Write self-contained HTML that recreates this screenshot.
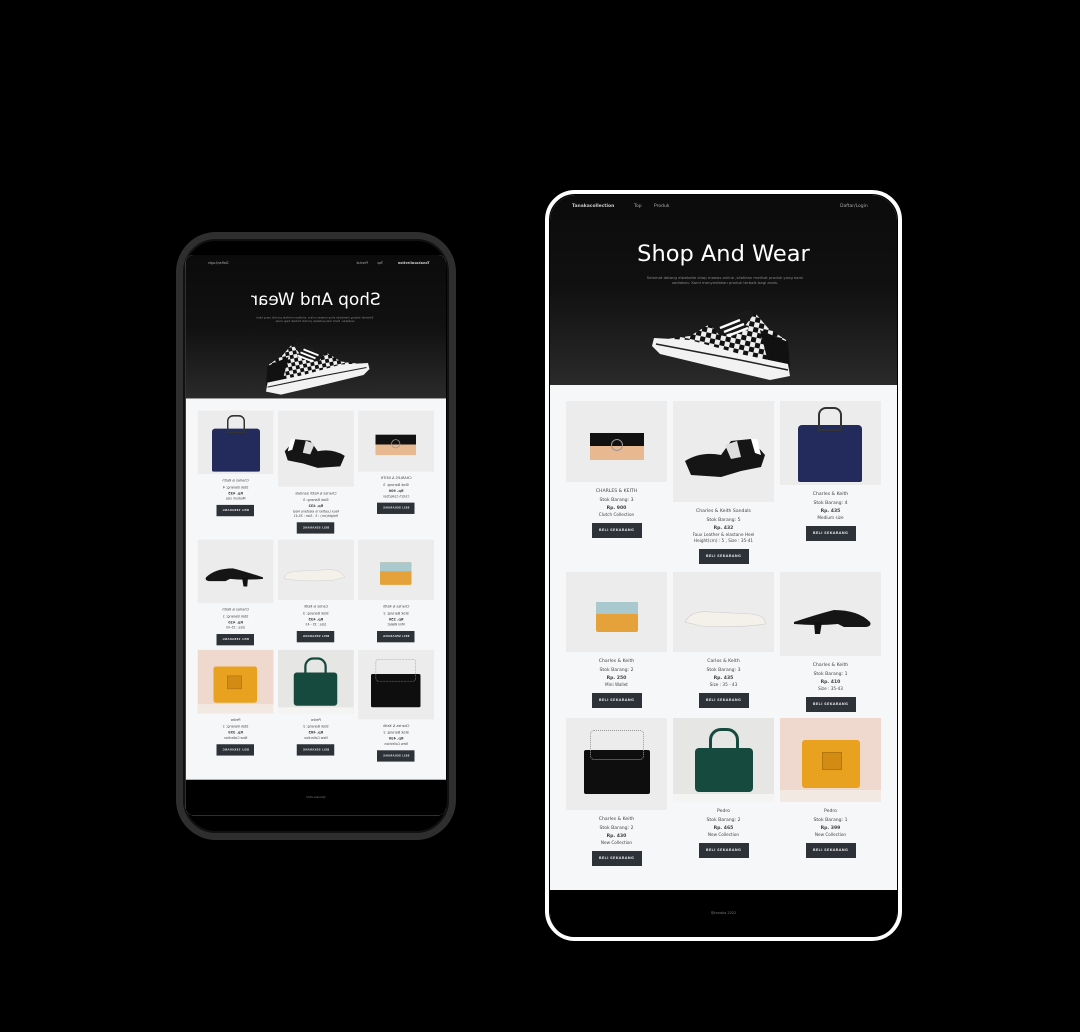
<!DOCTYPE html>
<html><head><meta charset="utf-8"><style>
*{margin:0;padding:0;box-sizing:border-box}
body{width:1080px;height:1032px;background:#000;position:relative;overflow:hidden;font-family:"DejaVu Sans","Liberation Sans",sans-serif}
.frameR{position:absolute;left:545px;top:190px;width:357px;height:751px;border:4px solid #fff;border-radius:30px;background:#000}
.frameL{position:absolute;left:176px;top:232px;width:280px;height:608px;border:7px solid #2e2e2e;border-radius:40px;background:#000;box-shadow:0 0 0 2px #111 inset}
.screen{position:absolute;width:347px;height:742px;overflow:hidden;background:#f6f7f9;transform-origin:0 0}
.hdr{position:absolute;left:0;top:0;width:347px;height:190px;background:linear-gradient(#0b0b0b 0%,#111 50%,#2a2a2a 100%)}
.nav{position:absolute;top:9px;font-size:4.5px;color:#aaa}
.title{position:absolute;top:46px;width:100%;text-align:center;color:#fff;font-size:22.5px;font-family:"DejaVu Sans",sans-serif}
.sub{position:absolute;top:80px;left:95px;width:160px;text-align:center;color:#888;font-size:3.8px;line-height:5px}
.foot{position:absolute;left:0;top:695px;width:347px;height:47px;background:#000;color:#777;font-size:3.5px;text-align:center;padding-top:21px}
.card{position:absolute;width:101px;text-align:center;color:#444;font-size:4.6px;line-height:8.5px}
.img{width:101px;background:#ececec;position:relative;overflow:hidden;margin-bottom:6px}
.card b{font-size:4.6px;display:block;line-height:6px;margin-top:1px}
.card .s{line-height:6px;font-size:4.2px}
.btn{display:block;margin:5px auto 0;width:50px;height:15px;background:#2d3239;color:#ddd;font-size:3.5px;line-height:15px;letter-spacing:.3px;font-weight:bold}
.a{position:absolute}
</style></head><body>

<div class="frameR"></div>
<div class="frameL"></div>

<div class="screen" id="R" style="left:550px;top:195px;border-radius:26px 26px 24px 24px">
 <div class="hdr">
  <div class="nav" style="left:22px;font-weight:bold;color:#ccc">Tanakacollection</div>
  <div class="nav" style="left:84px">Top</div>
  <div class="nav" style="left:104px">Produk</div>
  <div class="nav" style="left:290px">Daftar/Login</div>
  <div class="title">Shop And Wear</div>
  <div class="sub">Selamat datang diwebsite shop mawas online ,silahkan melihat produk yang kami sediakan. Kami menyediakan produk terbaik bagi anda.</div>
  <svg class="a" style="left:100px;top:115px" width="142" height="75" viewBox="0 0 142 75">
   <defs><pattern id="ck" width="10" height="10" patternUnits="userSpaceOnUse" patternTransform="rotate(12)"><rect width="10" height="10" fill="#eee"/><rect width="5" height="5" fill="#111"/><rect x="5" y="5" width="5" height="5" fill="#111"/></pattern></defs>
   <path d="M8 30 L40 26 L60 14 L80 8 L98 2 L106 4 L118 18 L136 30 L138 52 L120 56 Z" fill="url(#ck)"/>
   <path d="M60 14 L80 6 L98 0 L104 4 L92 20 L70 26 Z" fill="#1a1a1a"/>
   <path d="M110 20 L138 32 L140 58 L118 52 Z" fill="#111"/>
   <path d="M4 28 L40 30 L90 44 L138 54 L140 66 L120 70 L60 56 L10 44 L2 36 Z" fill="#f2f2f2"/>
   <path d="M6 34 L90 50 L138 60" stroke="#222" stroke-width="1.5" fill="none"/>
   <path d="M70 18 L90 10 M74 22 L94 14 M78 26 L98 18" stroke="#fff" stroke-width="2.5"/>
  </svg>
 </div>

 <div class="card" style="left:16px;top:206px"><div class="img" style="height:81px"><div class="a" style="left:24px;top:32px;width:54px;height:13px;background:#111"></div><div class="a" style="left:24px;top:45px;width:54px;height:14px;background:#e8b890"></div><div class="a" style="left:45px;top:38px;width:12px;height:12px;border:1.5px solid #999;border-radius:50%"></div></div>
  CHARLES &amp; KEITH<br>Stok Barang: 3<b>Rp. 900</b><div class="s">Clutch Collection</div><span class="btn">BELI SEKARANG</span></div>
 <div class="card" style="left:123px;top:206px"><div class="img" style="height:101px"><svg class="a" style="left:8px;top:30px" width="88" height="50"><path d="M4 30 Q20 20 40 24 L50 10 L70 8 L84 24 L80 36 L60 40 L40 46 L10 44 Z" fill="#151515"/><path d="M44 14 L56 10 L60 26 L50 28 Z" fill="#ddd"/><path d="M70 8 L76 8 L80 24 L74 22 Z" fill="#fff"/></svg></div>
  Charles &amp; Keith Sandals<br>Stok Barang: 5<b>Rp. 432</b><div class="s">Faux Leather &amp; elastane Heel<br>Height(cm) : 5 , Size : 35-41</div><span class="btn">BELI SEKARANG</span></div>
 <div class="card" style="left:230px;top:206px"><div class="img" style="height:84px"><div class="a" style="left:18px;top:24px;width:64px;height:57px;background:#232a5c;border-radius:4px 4px 2px 2px"></div><div class="a" style="left:38px;top:6px;width:24px;height:24px;border:2px solid #333;border-radius:8px 8px 0 0"></div></div>
  Charles &amp; Keith<br>Stok Barang: 4<b>Rp. 435</b><div class="s">Medium size</div><span class="btn">BELI SEKARANG</span></div>

 <div class="card" style="left:16px;top:377px"><div class="img" style="height:80px"><div class="a" style="left:30px;top:30px;width:42px;height:30px;background:#e5a13a;border-radius:2px"></div><div class="a" style="left:30px;top:30px;width:42px;height:12px;background:#a9c9cf"></div></div>
  Charles &amp; Keith<br>Stok Barang: 2<b>Rp. 250</b><div class="s">Mini Wallet</div><span class="btn">BELI SEKARANG</span></div>
 <div class="card" style="left:123px;top:377px"><div class="img" style="height:80px"><svg class="a" style="left:8px;top:30px" width="88" height="30"><path d="M4 20 Q10 8 30 10 L70 12 Q86 14 84 22 Q60 26 20 24 Z" fill="#f4f1ea" stroke="#ccc" stroke-width=".6"/></svg></div>
  Carlos &amp; Keith<br>Stok Barang: 3<b>Rp. 435</b><div class="s">Size : 35 - 43</div><span class="btn">BELI SEKARANG</span></div>
 <div class="card" style="left:230px;top:377px"><div class="img" style="height:84px"><svg class="a" style="left:8px;top:28px" width="88" height="40"><path d="M6 22 Q30 14 46 10 Q70 10 82 22 Q84 26 78 27 L56 27 L50 24 Q30 26 6 24 Z" fill="#151515"/><path d="M26 22 L34 22 L32 34 L27 34 Z" fill="#111"/></svg></div>
  Charles &amp; Keith<br>Stok Barang: 1<b>Rp. 410</b><div class="s">Size : 35-43</div><span class="btn">BELI SEKARANG</span></div>

 <div class="card" style="left:16px;top:523px"><div class="img" style="height:92px"><div class="a" style="left:18px;top:32px;width:66px;height:44px;background:#0e0e0e;border-radius:2px"></div><div class="a" style="left:24px;top:12px;width:54px;height:30px;border:1px dotted #999;border-radius:4px"></div></div>
  Charles &amp; Keith<br>Stok Barang: 2<b>Rp. 430</b><div class="s">New Collection</div><span class="btn">BELI SEKARANG</span></div>
 <div class="card" style="left:123px;top:523px"><div class="img" style="height:84px;background:#e6e6e4"><div class="a" style="left:22px;top:30px;width:58px;height:44px;background:#174a3e;border-radius:4px"></div><div class="a" style="left:36px;top:10px;width:30px;height:26px;border:3px solid #174a3e;border-radius:12px 12px 0 0"></div><div class="a" style="left:0;top:76px;width:101px;height:8px;background:#f4f4f2"></div></div>
  Pedro<br>Stok Barang: 2<b>Rp. 465</b><div class="s">New Collection</div><span class="btn">BELI SEKARANG</span></div>
 <div class="card" style="left:230px;top:523px"><div class="img" style="height:84px;background:#efd9cf"><div class="a" style="left:22px;top:22px;width:58px;height:48px;background:#e9a21f;border-radius:3px"></div><div class="a" style="left:42px;top:34px;width:20px;height:18px;background:#d28c14;border:1px solid #b57610"></div><div class="a" style="left:0;top:72px;width:101px;height:12px;background:#f2e9e2"></div></div>
  Pedro<br>Stok Barang: 1<b>Rp. 399</b><div class="s">New Collection</div><span class="btn">BELI SEKARANG</span></div>

 <div class="foot">@tanaka 2022</div>
</div>

<script>
var r=document.getElementById('R');var c=r.cloneNode(true);c.id='L';
c.style.left='446px';c.style.top='255px';c.style.borderRadius='10px';
c.style.transform='scale(-0.75,0.755)';
document.body.appendChild(c);
</script>
</body></html>
